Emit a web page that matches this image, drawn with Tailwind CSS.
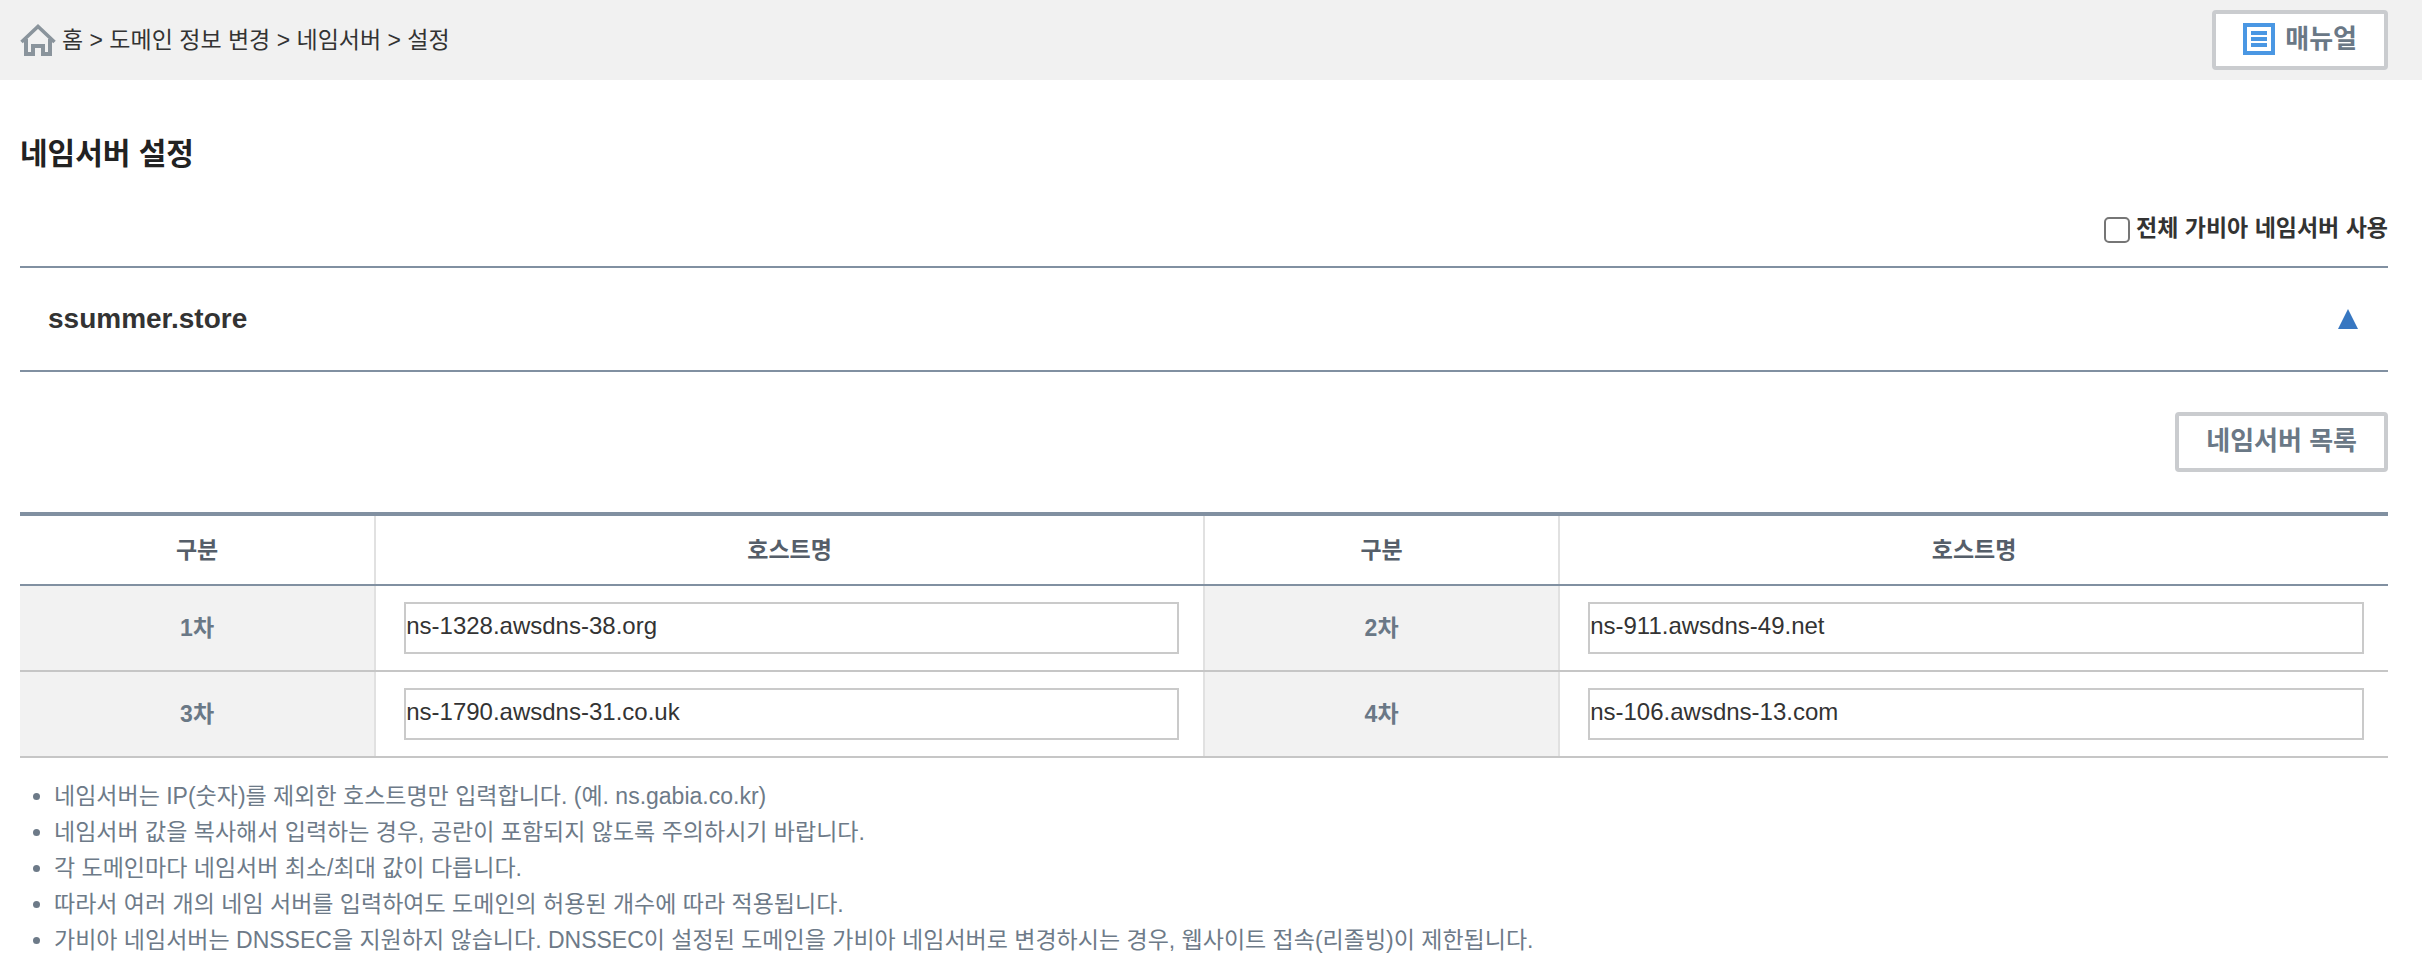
<!DOCTYPE html>
<html lang="ko">
<head>
  <meta charset="UTF-8">
  <meta name="viewport" content="width=device-width, initial-scale=1.0">
  <title>네임서버 설정</title>
  <script src="https://cdn.jsdelivr.net/npm/@tailwindcss/browser@4"></script>
</head>
<body class="bg-white text-[#333] text-[23px] leading-9 font-['Liberation_Sans','Noto_Sans_CJK_KR',sans-serif]">

  <!-- Breadcrumb bar -->
  <header class="flex items-center justify-between h-20 pl-5 pr-[34px] bg-[#f1f1f1]">
    <nav class="flex items-center gap-1.5">
      <a href="#" aria-label="홈">
        <svg class="w-9 h-9" viewBox="0 0 36 36" fill="none" stroke="#8a949c" stroke-width="4">
          <path d="M1.5 20 L18 4.5 L34.5 20" stroke-width="3.6" />
          <path d="M6 17 V32 H13 V24 H23 V32 H30 V17" />
        </svg>
      </a>
      <p>홈 &gt; 도메인 정보 변경 &gt; 네임서버 &gt; 설정</p>
    </nav>
    <button type="button" class="flex items-center gap-2.5 h-[60px] px-[27px] pb-0.5 border-4 border-[#cacccf] rounded-[4px] bg-white text-[#6a7886] text-[26px] font-bold">
      <svg class="w-8 h-8" viewBox="0 0 32 32" fill="none" stroke="#4a97e3" stroke-width="4">
        <path d="M2 2 H30 V30 H2 Z" fill="#fff" />
        <path d="M8 10 H24 M8 16 H24 M8 22 H24" />
      </svg>
      <span>매뉴얼</span>
    </button>
  </header>

  <main class="pl-5 pr-[34px]">
    <h1 class="pt-[54px] text-[30px] leading-10 font-bold text-[#222]">네임서버 설정</h1>

    <div class="flex justify-end items-center gap-1.5 pt-9 pb-5">
      <input id="use-all" type="checkbox" class="appearance-none w-[26px] h-[26px] mt-1 border-2 border-[#767676] rounded-[5px] bg-white checked:bg-[#3777c1]">
      <label for="use-all" class="font-bold">전체 가비아 네임서버 사용</label>
    </div>

    <!-- Domain -->
    <section class="flex items-center justify-between h-[106px] px-7 border-y-2 border-[#8190a1]">
      <h2 class="text-[28px] font-bold">ssummer.store</h2>
      <button type="button" aria-label="접기" class="px-0.5">
        <svg class="w-5 h-5" viewBox="0 0 20 20" fill="#3777c1"><path d="M10 0 L20 20 H0 Z" /></svg>
      </button>
    </section>

    <div class="flex justify-end py-10">
      <button type="button" class="h-[60px] px-[27px] pb-0.5 border-4 border-[#cacccf] rounded-[4px] bg-white text-[#6a7886] text-[26px] font-bold">네임서버 목록</button>
    </div>

    <!-- Name servers -->
    <table class="w-full table-fixed border-collapse border-t-4 border-t-[#8190a1]">
      <colgroup>
        <col class="w-[15%]">
        <col class="w-[35%]">
        <col class="w-[15%]">
        <col class="w-[35%]">
      </colgroup>
      <thead>
        <tr class="h-[71px] text-[#555e69] *:border-b-2 *:border-b-[#8190a1]">
          <th scope="col">구분</th>
          <th scope="col" class="border-x-2 border-x-[#e1e1e1]">호스트명</th>
          <th scope="col">구분</th>
          <th scope="col" class="border-l-2 border-l-[#e1e1e1]">호스트명</th>
        </tr>
      </thead>
      <tbody>
        <tr class="h-[86px] *:border-b-2 *:border-b-[#c6c6c6]">
          <th scope="row" class="bg-[#f2f2f2] text-[#6a7886]"><label for="ns1">1차</label></th>
          <td class="pl-7 pr-6 border-x-2 border-x-[#e1e1e1]">
            <input id="ns1" type="text" value="ns-1328.awsdns-38.org" class="block w-full h-[52px] pb-1 border-2 border-[#cacaca] text-2xl">
          </td>
          <th scope="row" class="bg-[#f2f2f2] text-[#6a7886]"><label for="ns2">2차</label></th>
          <td class="pl-7 pr-6 border-l-2 border-l-[#e1e1e1]">
            <input id="ns2" type="text" value="ns-911.awsdns-49.net" class="block w-full h-[52px] pb-1 border-2 border-[#cacaca] text-2xl">
          </td>
        </tr>
        <tr class="h-[86px] *:border-b-2 *:border-b-[#c6c6c6]">
          <th scope="row" class="bg-[#f2f2f2] text-[#6a7886]"><label for="ns3">3차</label></th>
          <td class="pl-7 pr-6 border-x-2 border-x-[#e1e1e1]">
            <input id="ns3" type="text" value="ns-1790.awsdns-31.co.uk" class="block w-full h-[52px] pb-1 border-2 border-[#cacaca] text-2xl">
          </td>
          <th scope="row" class="bg-[#f2f2f2] text-[#6a7886]"><label for="ns4">4차</label></th>
          <td class="pl-7 pr-6 border-l-2 border-l-[#e1e1e1]">
            <input id="ns4" type="text" value="ns-106.awsdns-13.com" class="block w-full h-[52px] pb-1 border-2 border-[#cacaca] text-2xl">
          </td>
        </tr>
      </tbody>
    </table>

    <!-- Notes -->
    <ul class="list-disc mt-5 pl-[34px] text-[#6d7a88]">
      <li>네임서버는 IP(숫자)를 제외한 호스트명만 입력합니다. (예. ns.gabia.co.kr)</li>
      <li>네임서버 값을 복사해서 입력하는 경우, 공란이 포함되지 않도록 주의하시기 바랍니다.</li>
      <li>각 도메인마다 네임서버 최소/최대 값이 다릅니다.</li>
      <li>따라서 여러 개의 네임 서버를 입력하여도 도메인의 허용된 개수에 따라 적용됩니다.</li>
      <li>가비아 네임서버는 DNSSEC을 지원하지 않습니다. DNSSEC이 설정된 도메인을 가비아 네임서버로 변경하시는 경우, 웹사이트 접속(리졸빙)이 제한됩니다.</li>
    </ul>
  </main>

</body>
</html>
